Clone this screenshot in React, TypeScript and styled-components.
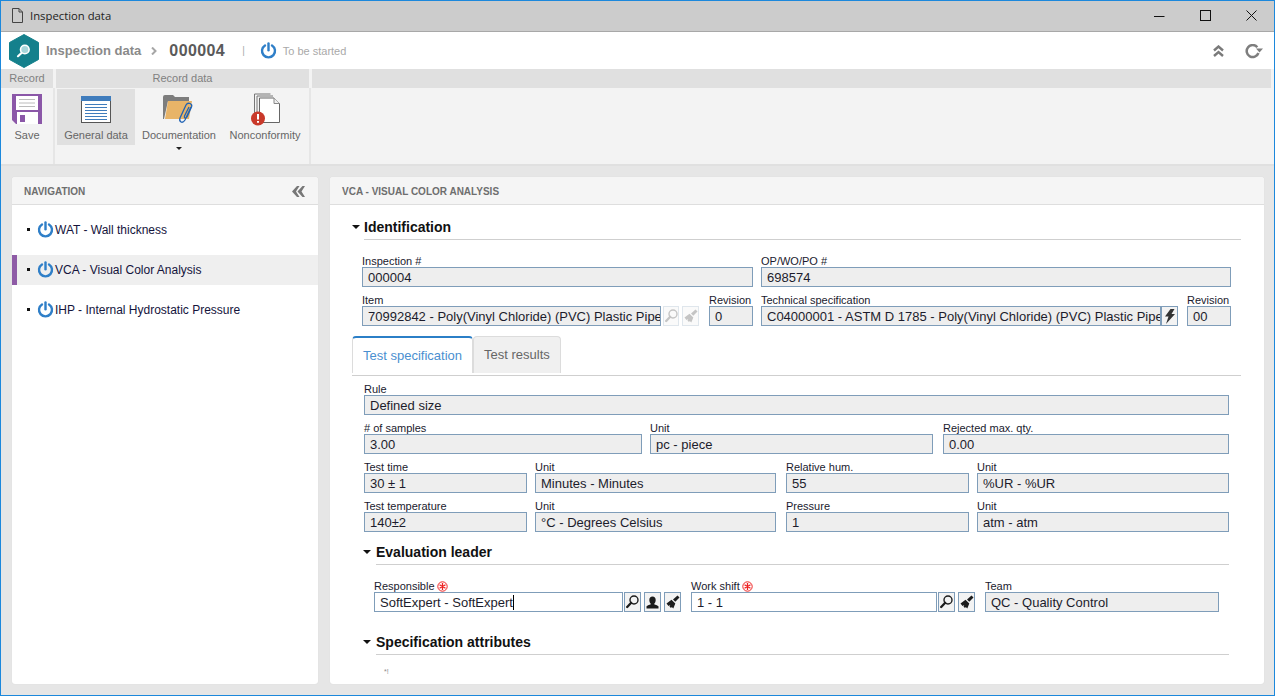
import React from 'react'
import styled, { createGlobalStyle } from 'styled-components'

const GlobalStyle = createGlobalStyle`
  html, body { margin: 0; height: 100%; overflow: hidden; }
  #root { height: 100%; }
  * { box-sizing: border-box; }
  body { font-family: "Liberation Sans", Arial, sans-serif; color: #222; }
`

const Window = styled.div`
  height: 696px;
  width: 1275px;
  display: flex;
  flex-direction: column;
  border: 1px solid #1c88dc;
  background: #e6e6e6;
`

const TitleBar = styled.div`
  height: 31px;
  flex: none;
  display: flex;
  align-items: center;
  background: #cccccc;
  border-bottom: 1px solid #a8a8a8;
  padding: 0 0 1px 11px;
`

const TitleText = styled.span`
  font-family: "Open Sans", sans-serif;
  font-size: 11.3px;
  margin-left: 7px;
  color: #222;
  flex: 1;
`

const WinButton = styled.div`
  width: 46px;
  height: 29px;
  display: flex;
  align-items: center;
  justify-content: center;
`

const Header = styled.div`
  height: 37px;
  flex: none;
  background: #fff;
  display: flex;
  align-items: center;
  padding-left: 8px;
`

const Crumb = styled.span`
  font-size: 13px;
  font-weight: 700;
  color: #8a8a8a;
  margin: 0 10px 0 7px;
`

const RecordId = styled.span`
  font-size: 16px;
  font-weight: 700;
  color: #5a5a5a;
  margin-left: 12px;
  letter-spacing: 0.4px;
`

const Pipe = styled.span`
  font-size: 10px;
  color: #aaa;
  margin: 0 15px 0 17px;
`

const Status = styled.span`
  font-size: 11px;
  color: #a9a9a9;
  margin-left: 6px;
  flex: 1;
`

const HeaderTools = styled.div`
  display: flex;
  align-items: center;
  gap: 21px;
  padding: 1px 11px 0 0;
`

const Ribbon = styled.div`
  height: 97px;
  flex: none;
  display: flex;
  background: #f3f3f3;
  border-bottom: 2px solid #e0e0e0;
`

const RibbonGroup = styled.div<{ $w?: number }>`
  ${({ $w }) => ($w ? `width: ${$w}px; flex: none;` : 'flex: 1;')}
  display: flex;
  flex-direction: column;
  margin-right: 3px;
`

const GroupTitle = styled.div`
  height: 19px;
  background: #e0e0e0;
  text-align: center;
  font-size: 11px;
  line-height: 19px;
  color: #808080;
`

const GroupBody = styled.div<{ $line?: boolean }>`
  flex: 1;
  display: flex;
  padding: 1px 0 0 1px;
  ${({ $line }) => ($line ? 'box-shadow: 2px 0 0 #e6e6e6;' : '')}
`

const RibbonButton = styled.div<{ $w: number; $active?: boolean }>`
  width: ${({ $w }) => $w}px;
  height: 56px;
  flex: none;
  display: flex;
  flex-direction: column;
  align-items: center;
  background: ${({ $active }) => ($active ? '#e0e0e0' : 'transparent')};
`

const IconSlot = styled.div`
  height: 40px;
  flex: none;
  display: flex;
  align-items: center;
  justify-content: center;
`

const RibbonLabel = styled.div`
  font-size: 11px;
  color: #666;
  line-height: 13px;
  flex: none;
  white-space: nowrap;
`

const DropCaret = styled.div`
  width: 0;
  height: 0;
  flex: none;
  margin-top: 5px;
  border-left: 3px solid transparent;
  border-right: 3px solid transparent;
  border-top: 3px solid #222;
`

const Main = styled.div`
  flex: 1;
  min-height: 0;
  display: flex;
  gap: 12px;
  padding: 11px 10px 11px 11px;
`

const Panel = styled.div<{ $w?: number }>`
  ${({ $w }) => ($w ? `width: ${$w}px; flex: none;` : 'flex: 1;')}
  background: #fff;
  border-radius: 3px;
  overflow: hidden;
  display: flex;
  flex-direction: column;
  box-shadow: 0 0 1px #cfcfcf;
`

const PanelHead = styled.div`
  height: 28px;
  flex: none;
  background: #f5f5f5;
  border-bottom: 1px solid #dedede;
  display: flex;
  align-items: center;
  justify-content: space-between;
  padding: 1px 12px 0;
  font-size: 10px;
  font-weight: 700;
  color: #6e6e6e;
  text-transform: uppercase;
`

const NavList = styled.div`
  padding-top: 10px;
  display: flex;
  flex-direction: column;
  gap: 10px;
`

const NavItem = styled.div<{ $active?: boolean }>`
  height: 30px;
  display: flex;
  align-items: center;
  padding-left: ${({ $active }) => ($active ? '10px' : '15px')};
  background: ${({ $active }) => ($active ? '#efefef' : 'transparent')};
  border-left: ${({ $active }) => ($active ? '5px solid #8e5ba6' : '0')};
  font-size: 12px;
  color: #14143c;
`

const NavText = styled.span`
  margin-left: 1px;
`

const Bullet = styled.span`
  width: 3px;
  height: 3px;
  flex: none;
  background: #111;
  margin: 0 7px 2px 0;
`

const FormBody = styled.div`
  flex: 1;
  min-height: 0;
  padding: 12px 23px 0 22px;
`

const SectionHead = styled.div<{ $sub?: boolean; $top?: number }>`
  display: flex;
  align-items: center;
  height: 22px;
  padding-bottom: 2px;
  margin-top: ${({ $top }) => $top ?? 0}px;
  margin-left: ${({ $sub }) => ($sub ? '11px' : '0')};
  margin-right: ${({ $sub }) => ($sub ? '12px' : '0')};
  font-size: 14px;
  font-weight: 700;
  color: #111;
`

const SectionCaret = styled.span<{ $sub?: boolean }>`
  width: 0;
  height: 0;
  margin-right: ${({ $sub }) => ($sub ? '5px' : '4px')};
  border-left: 4px solid transparent;
  border-right: 4px solid transparent;
  border-top: 4px solid #111;
`

const SectionRule = styled.div<{ $sub?: boolean }>`
  height: 1px;
  background: #cfcfcf;
  margin-left: ${({ $sub }) => ($sub ? '24px' : '12px')};
  margin-right: ${({ $sub }) => ($sub ? '12px' : '0')};
`

const Rows = styled.div<{ $top: number; $left: number }>`
  display: flex;
  flex-direction: column;
  gap: 6px;
  margin-top: ${({ $top }) => $top}px;
  margin-left: ${({ $left }) => $left}px;
`

const Row = styled.div`
  display: flex;
  align-items: flex-end;
`

const Field = styled.div<{ $w: number; $ml?: number }>`
  width: ${({ $w }) => $w}px;
  margin-left: ${({ $ml }) => $ml ?? 0}px;
  flex: none;
  min-width: 0;
`

const Label = styled.div`
  height: 13px;
  padding-top: 2px;
  font-size: 11px;
  line-height: 13px;
  color: #1a1a2e;
  display: flex;
  align-items: center;
  white-space: nowrap;
  gap: 2px;
`

const Value = styled.div<{ $editable?: boolean }>`
  height: 20px;
  border: 1px solid #7f9db9;
  background: ${({ $editable }) => ($editable ? '#fff' : '#eeeeee')};
  font-size: 13px;
  line-height: 19px;
  padding-left: 5px;
  color: #1c1c2c;
  white-space: nowrap;
  overflow: hidden;
`

const TextCaret = styled.span`
  display: inline-block;
  width: 1px;
  height: 15px;
  background: #000;
  vertical-align: -3px;
`

const IconBtn = styled.div<{ $ml?: number; $w?: number; $off?: boolean }>`
  width: ${({ $w }) => $w ?? 17}px;
  height: 20px;
  flex: none;
  margin-left: ${({ $ml }) => $ml ?? 1}px;
  border: 1px solid ${({ $off }) => ($off ? '#dfe6ec' : '#7f9db9')};
  background: ${({ $off }) => ($off ? '#fafafa' : '#f3f3f3')};
  color: ${({ $off }) => ($off ? '#c4c4c4' : '#1c1c1c')};
  display: flex;
  align-items: center;
  justify-content: center;
`

const TabBar = styled.div`
  height: 40px;
  margin-top: 10px;
  display: flex;
  align-items: flex-start;
  border-bottom: 1px solid #cfcfcf;
`

const Tab = styled.div<{ $active?: boolean }>`
  height: 37px;
  display: flex;
  align-items: center;
  font-size: 13px;
  border-radius: 4px 4px 0 0;
  padding: 0 ${({ $active }) => ($active ? '10px' : '10px')} 2px;
  border: 1px solid #dcdcdc;
  border-bottom: 0;
  white-space: nowrap;
  ${({ $active }) =>
    $active
      ? 'border-top: 2px solid #2b7fc7; background: #fff; color: #4a8fd0; width: 121px; padding-bottom: 1px;'
      : 'background: #f0f0f0; color: #666; width: 88px;'}
`

const Footnote = styled.div`
  font-size: 7px;
  color: #8a8a8a;
  margin: 13px 0 0 32px;
  line-height: 8px;
`

const PowerIcon = () => (
  <svg width="17" height="17" viewBox="0 0 17 17" fill="none" stroke="#2f7fc8" strokeWidth="2.4" style={{ flex: 'none', marginBottom: 1 }}>
    <path d="M5 3.400a6.500 6.500 0 1 0 7 0" strokeLinecap="round" />
    <path d="M8.500 1.400v6.800" strokeLinecap="round" />
  </svg>
)

const Logo = () => (
  <svg width="30" height="34" viewBox="0 0 30 34">
    <path d="M15 0.500 29.500 8.500v17L15 33.500 0.500 25.500v-17z" fill="#14808c" stroke="#14808c" strokeLinejoin="round" />
    <circle cx="15.800" cy="15.500" r="4.300" fill="#a6d6da" stroke="#fff" strokeWidth="1.600" />
    <path d="M12.500 19 9 22.200" stroke="#fff" strokeWidth="2.200" strokeLinecap="round" />
  </svg>
)

const SaveIcon = () => (
  <svg width="30" height="30" viewBox="0 0 30 30">
    <path d="M0 0h30v30H4l-4-4z" fill="#8b57a8" />
    <rect x="4" y="2" width="22" height="14" fill="#fff" />
    <path d="M7 5.500h16M7 9h16M7 12.500h16" stroke="#bcbcbc" strokeWidth="1" />
    <rect x="5" y="18" width="21" height="12" fill="#fff" />
    <rect x="8" y="21" width="5" height="7" fill="#8b57a8" />
  </svg>
)

const GeneralIcon = () => (
  <svg width="30" height="27" viewBox="0 0 30 27">
    <rect x="0.500" y="0.500" width="29" height="26" fill="#fff" stroke="#555" />
    <rect x="0" y="0" width="30" height="5" fill="#3f7cbc" />
    <path d="M4 8.500h22M4 11.500h22M4 14.500h22M4 17.500h22M4 20.500h22M4 23.500h22" stroke="#3f7cbc" strokeWidth="1.200" />
  </svg>
)

const FolderIcon = () => (
  <svg width="32" height="30" viewBox="0 0 32 30">
    <path d="M0 3q0-2 2-2h8l2 2h14v4H5L1 25H0z" fill="#7d7d7d" />
    <path d="M2 25 5 7h24l-3 18z" fill="#e8b468" />
    <path
      d="M28 13 22 26q-2 3-4 2t-1-4L23 11q1.500-2.500 4-1.500t1.500 3.500L24 23q-1 1.500-2 1t-.5-2L26 13"
      fill="#f3f3f3"
      fillOpacity="0"
      stroke="#1f62b4"
      strokeWidth="1.300"
    />
  </svg>
)

const NonconfIcon = () => (
  <svg width="29" height="33" viewBox="0 0 29 33">
    <path d="M3.500 24V1h16" fill="none" stroke="#777" />
    <path d="M6 24V3h16" fill="none" stroke="#777" />
    <path d="M8.500 29.500V5h14.500l5.500 5.500v19z" fill="#fff" stroke="#666" />
    <path d="M23 5v5.500h5.500" fill="#eee" stroke="#888" />
    <circle cx="7" cy="25.500" r="7" fill="#c9392a" />
    <path d="M7 21v5.500M7 28v1.800" stroke="#fff" strokeWidth="2" />
  </svg>
)

const DocIcon = () => (
  <svg width="11" height="15" viewBox="0 0 11 15" fill="none" stroke="#444">
    <path d="M0.500 0.500h6.500l3.500 3.500v10.500h-10z" />
    <path d="M7 0.500v3.500h3.500" />
  </svg>
)

const CrumbArrow = () => (
  <svg width="6" height="8" viewBox="0 0 6 8" fill="none" stroke="#a6a6a6" strokeWidth="2">
    <path d="M1 0.500 4.500 4 1 7.500" />
  </svg>
)

const CollapseUp = () => (
  <svg width="11" height="12" viewBox="0 0 11 12" fill="none" stroke="#7a7a7a" strokeWidth="2.400">
    <path d="M1 5.500 5.500 1.500 10 5.500M1 11 5.500 7 10 11" />
  </svg>
)

const RefreshIcon = () => (
  <svg width="18" height="15" viewBox="0 0 18 15" fill="none" stroke="#7e7e7e" strokeWidth="2.500">
    <path d="M12.300 3.200A6 6 0 1 0 13.400 9" />
    <path d="M11 4.500h7l-3.500 4z" fill="#7e7e7e" stroke="none" />
  </svg>
)

const CollapseLeft = () => (
  <svg width="13" height="11" viewBox="0 0 13 11" fill="#777" style={{ marginRight: 1 }}>
    <path d="M5 0h2.500L4 5.500 7.500 11H5L0 5.500zM10.500 0H13L9.500 5.500 13 11h-2.500l-5-5.500z" />
  </svg>
)

const SearchIcon = () => (
  <svg width="13" height="14" viewBox="0 0 13 14" fill="none" stroke="currentColor">
    <circle cx="8" cy="5" r="4" strokeWidth="1.400" />
    <path d="M5.200 7.800 1.200 12" strokeWidth="2.300" strokeLinecap="round" />
  </svg>
)

const BroomIcon = () => (
  <svg width="14" height="14" viewBox="0 0 14 14" fill="currentColor">
    <path d="M11.500 .5 13.500 2.500 9.300 6.800 7 4.500z" />
    <path d="M5.500 4.800 9.300 8.600 7.300 13.500 5.800 12 5 13 3.500 11.500 4.300 10 2.500 11 .5 8.500z" />
  </svg>
)

const PersonIcon = () => (
  <svg width="13" height="13" viewBox="0 0 13 13" fill="currentColor">
    <path d="M6.500 0.500c2 0 3.200 1.500 3.200 3.500 0 2-.9 3.300-1.600 4 0 1 3.900 1.100 4.400 2.500V12.500H.5v-2c.5-1.400 4.400-1.500 4.400-2.500C4.200 7.300 3.300 6 3.300 4 3.300 2 4.500 0.500 6.500 0.500z" />
  </svg>
)

const BoltIcon = () => (
  <svg width="11" height="15" viewBox="0 0 11 15" fill="#333">
    <path d="M6.500 0 10.500 0 7.500 5H11L2 15 4.500 7.500H1z" />
  </svg>
)

const Required = () => (
  <svg width="11" height="11" viewBox="0 0 11 11" fill="none" stroke="#e22">
    <circle cx="5.500" cy="5.500" r="4.700" />
    <path d="M5.500 2v7M2.500 3.700l6 3.600M8.500 3.700l-6 3.600" strokeWidth="1.300" />
  </svg>
)

const navItems = [
  { label: 'WAT - Wall thickness' },
  { label: 'VCA - Visual Color Analysis', active: true },
  { label: 'IHP - Internal Hydrostatic Pressure' },
]

type Spec = { label: string; value: string; w: number; ml?: number }

const FieldRow = ({ fields }: { fields: Spec[] }) => (
  <Row>
    {fields.map((f) => (
      <Field key={f.label + f.value} $w={f.w} $ml={f.ml}>
        <Label>{f.label}</Label>
        <Value>{f.value}</Value>
      </Field>
    ))}
  </Row>
)

export default function App() {
  return (
    <Window>
      <GlobalStyle />
      <TitleBar>
        <DocIcon />
        <TitleText>Inspection data</TitleText>
        <WinButton>
          <svg width="12" height="12" viewBox="0 0 12 12" stroke="#111"><path d="M1 6.500h10.500" /></svg>
        </WinButton>
        <WinButton>
          <svg width="11" height="11" viewBox="0 0 11 11" fill="none" stroke="#111"><rect x="0.500" y="0.500" width="10" height="10" /></svg>
        </WinButton>
        <WinButton>
          <svg width="11" height="11" viewBox="0 0 11 11" stroke="#111"><path d="M0.500 0.500l10 10M10.500 0.500l-10 10" /></svg>
        </WinButton>
      </TitleBar>

      <Header>
        <Logo />
        <Crumb>Inspection data</Crumb>
        <CrumbArrow />
        <RecordId>000004</RecordId>
        <Pipe>|</Pipe>
        <PowerIcon />
        <Status>To be started</Status>
        <HeaderTools>
          <CollapseUp />
          <RefreshIcon />
        </HeaderTools>
      </Header>

      <Ribbon>
        <RibbonGroup $w={52}>
          <GroupTitle>Record</GroupTitle>
          <GroupBody $line>
            <RibbonButton $w={50}>
              <IconSlot><SaveIcon /></IconSlot>
              <RibbonLabel>Save</RibbonLabel>
            </RibbonButton>
          </GroupBody>
        </RibbonGroup>
        <RibbonGroup $w={253}>
          <GroupTitle>Record data</GroupTitle>
          <GroupBody $line>
            <RibbonButton $w={78} $active>
              <IconSlot><GeneralIcon /></IconSlot>
              <RibbonLabel>General data</RibbonLabel>
            </RibbonButton>
            <RibbonButton $w={88}>
              <IconSlot><FolderIcon /></IconSlot>
              <RibbonLabel>Documentation</RibbonLabel>
              <DropCaret />
            </RibbonButton>
            <RibbonButton $w={84}>
              <IconSlot><NonconfIcon /></IconSlot>
              <RibbonLabel>Nonconformity</RibbonLabel>
            </RibbonButton>
          </GroupBody>
        </RibbonGroup>
        <RibbonGroup>
          <GroupTitle />
        </RibbonGroup>
      </Ribbon>

      <Main>
        <Panel $w={306}>
          <PanelHead>
            <span>Navigation</span>
            <CollapseLeft />
          </PanelHead>
          <NavList>
            {navItems.map((n) => (
              <NavItem key={n.label} $active={n.active}>
                <Bullet />
                <PowerIcon />
                <NavText>{n.label}</NavText>
              </NavItem>
            ))}
          </NavList>
        </Panel>

        <Panel>
          <PanelHead>VCA - Visual Color Analysis</PanelHead>
          <FormBody>
            <SectionHead><SectionCaret />Identification</SectionHead>
            <SectionRule />
            <Rows $top={14} $left={10}>
              <FieldRow
                fields={[
                  { label: 'Inspection #', value: '000004', w: 391 },
                  { label: 'OP/WO/PO #', value: '698574', w: 470, ml: 8 },
                ]}
              />
              <Row>
                <Field $w={299}>
                  <Label>Item</Label>
                  <Value>70992842 - Poly(Vinyl Chloride) (PVC) Plastic Pipe</Value>
                </Field>
                <IconBtn $off $ml={2} $w={16}><SearchIcon /></IconBtn>
                <IconBtn $off $ml={3}><BroomIcon /></IconBtn>
                <Field $w={44} $ml={10}>
                  <Label>Revision</Label>
                  <Value>0</Value>
                </Field>
                <Field $w={400} $ml={8}>
                  <Label>Technical specification</Label>
                  <Value>C04000001 - ASTM D 1785 - Poly(Vinyl Chloride) (PVC) Plastic Pipe</Value>
                </Field>
                <IconBtn $ml={0}><BoltIcon /></IconBtn>
                <Field $w={44} $ml={9}>
                  <Label>Revision</Label>
                  <Value>00</Value>
                </Field>
              </Row>
            </Rows>

            <TabBar>
              <Tab $active>Test specification</Tab>
              <Tab>Test results</Tab>
            </TabBar>

            <Rows $top={6} $left={12}>
              <FieldRow fields={[{ label: 'Rule', value: 'Defined size', w: 865 }]} />
              <FieldRow
                fields={[
                  { label: '# of samples', value: '3.00', w: 278 },
                  { label: 'Unit', value: 'pc - piece', w: 283, ml: 8 },
                  { label: 'Rejected max. qty.', value: '0.00', w: 286, ml: 10 },
                ]}
              />
              <FieldRow
                fields={[
                  { label: 'Test time', value: '30 ± 1', w: 163 },
                  { label: 'Unit', value: 'Minutes - Minutes', w: 241, ml: 8 },
                  { label: 'Relative hum.', value: '55', w: 183, ml: 10 },
                  { label: 'Unit', value: '%UR - %UR', w: 252, ml: 8 },
                ]}
              />
              <FieldRow
                fields={[
                  { label: 'Test temperature', value: '140±2', w: 163 },
                  { label: 'Unit', value: '°C - Degrees Celsius', w: 241, ml: 8 },
                  { label: 'Pressure', value: '1', w: 183, ml: 10 },
                  { label: 'Unit', value: 'atm - atm', w: 252, ml: 8 },
                ]}
              />
            </Rows>

            <SectionHead $sub $top={10}><SectionCaret $sub />Evaluation leader</SectionHead>
            <SectionRule $sub />
            <Rows $top={14} $left={22}>
              <Row>
                <Field $w={249}>
                  <Label>Responsible <Required /></Label>
                  <Value $editable>SoftExpert - SoftExpert<TextCaret /></Value>
                </Field>
                <IconBtn><SearchIcon /></IconBtn>
                <IconBtn $ml={3}><PersonIcon /></IconBtn>
                <IconBtn $ml={3}><BroomIcon /></IconBtn>
                <Field $w={246} $ml={10}>
                  <Label>Work shift <Required /></Label>
                  <Value $editable>1 - 1</Value>
                </Field>
                <IconBtn><SearchIcon /></IconBtn>
                <IconBtn $ml={3}><BroomIcon /></IconBtn>
                <Field $w={234} $ml={10}>
                  <Label>Team</Label>
                  <Value>QC - Quality Control</Value>
                </Field>
              </Row>
            </Rows>

            <SectionHead $sub $top={20}><SectionCaret $sub />Specification attributes</SectionHead>
            <SectionRule $sub />
            <Footnote>*!</Footnote>
          </FormBody>
        </Panel>
      </Main>
    </Window>
  )
}
